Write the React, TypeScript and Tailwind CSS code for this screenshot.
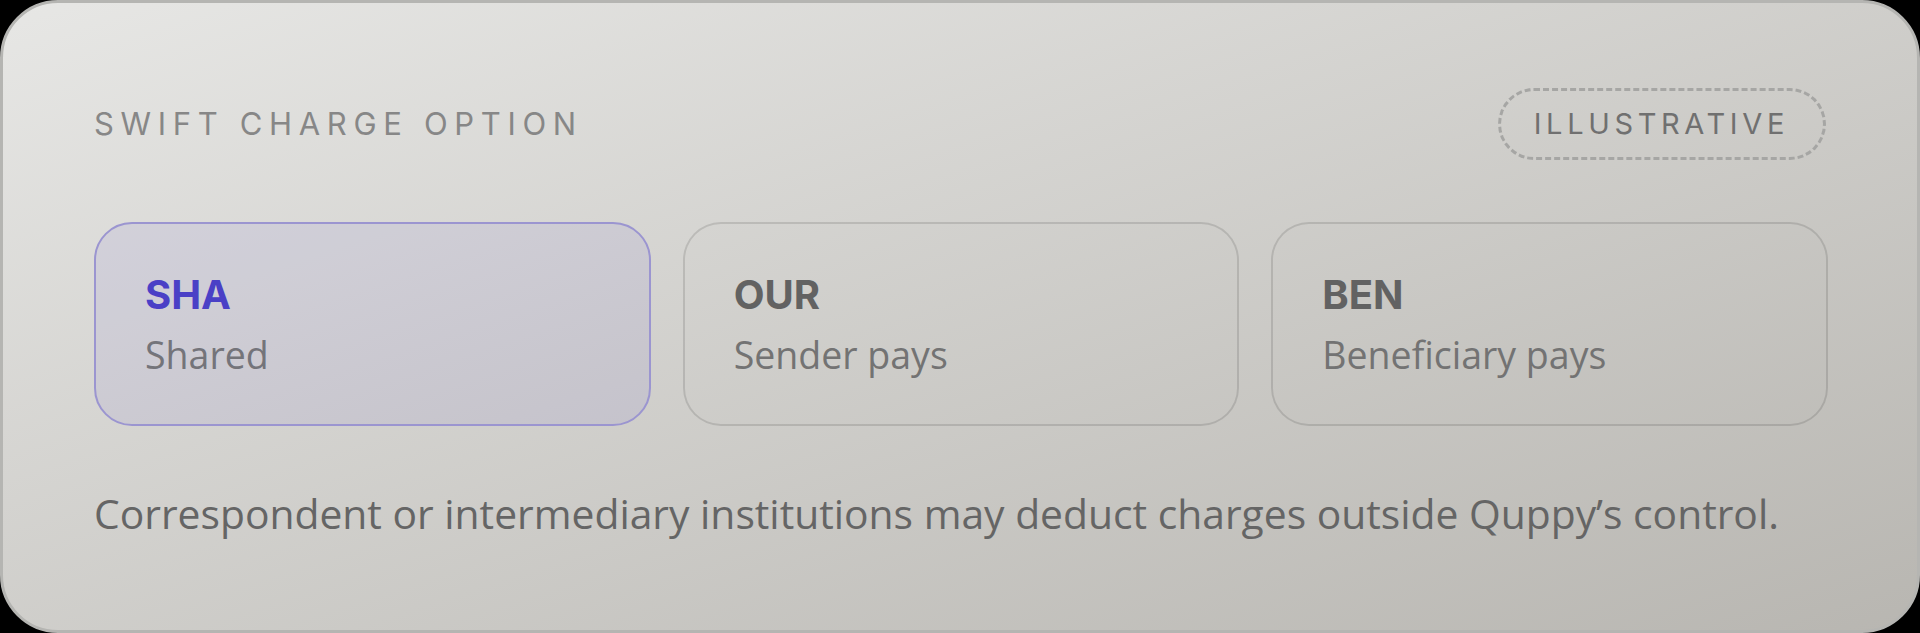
import React from "react";

type Option = { code: string; label: string; active?: boolean };

const options: Option[] = [
  { code: "SHA", label: "Shared", active: true },
  { code: "OUR", label: "Sender pays" },
  { code: "BEN", label: "Beneficiary pays" },
];

function ChargeCard({ code, label, active }: Option) {
  return (
    <div
      className={
        active
          ? "flex flex-col rounded-[38px] border-2 border-[#9b95d0] bg-[rgba(90,82,213,0.08)] px-[49px] pt-[47px] pb-[46px]"
          : "flex flex-col rounded-[38px] border-2 border-black/[0.12] bg-black/[0.005] px-[49px] pt-[47px] pb-[46px]"
      }
    >
      <span
        className={
          active
            ? "font-['Inter',sans-serif] text-[40px] leading-[48px] font-bold text-[#4a40c6]"
            : "font-['Inter',sans-serif] text-[40px] leading-[48px] font-bold text-[#626262]"
        }
      >
        {code}
      </span>
      <span
        className={
          active
            ? "mt-[13px] font-['Open_Sans',sans-serif] text-[37.5px] leading-[46px] text-[#74747a]"
            : "mt-[13px] font-['Open_Sans',sans-serif] text-[37.5px] leading-[46px] text-[#737373]"
        }
      >
        {label}
      </span>
    </div>
  );
}

export default function App() {
  return (
    <div className="h-[633px] w-[1920px] bg-black">
      <div className="flex h-full w-full flex-col rounded-[58px] border-[3px] border-[#b5b5b2] bg-linear-to-br from-[#e7e7e5] to-[#b8b6b1] px-[91px] pt-[85px]">
        <div className="flex h-[72px] items-center justify-between">
          <span className="font-['Inter',sans-serif] text-[31px] leading-[36px] tracking-[0.215em] text-[#878787]">
            SWIFT CHARGE OPTION
          </span>
          <span className="flex h-[72px] items-center rounded-full border-[3px] border-dashed border-[#a6a6a4] pl-[33px] pr-[34px] font-['Inter',sans-serif] text-[29px] leading-[36px] tracking-[0.16em] text-[#707070]">
            ILLUSTRATIVE
          </span>
        </div>

        <div className="-mr-[2px] mt-[62px] grid grid-cols-3 gap-[32px]">
          {options.map((o) => (
            <ChargeCard key={o.code} {...o} />
          ))}
        </div>

        <p className="mt-[57px] font-['Open_Sans',sans-serif] text-[40.8px] leading-[60px] text-[#656565]">
          Correspondent or intermediary institutions may deduct charges outside Quppy’s control.
        </p>
      </div>
    </div>
  );
}
